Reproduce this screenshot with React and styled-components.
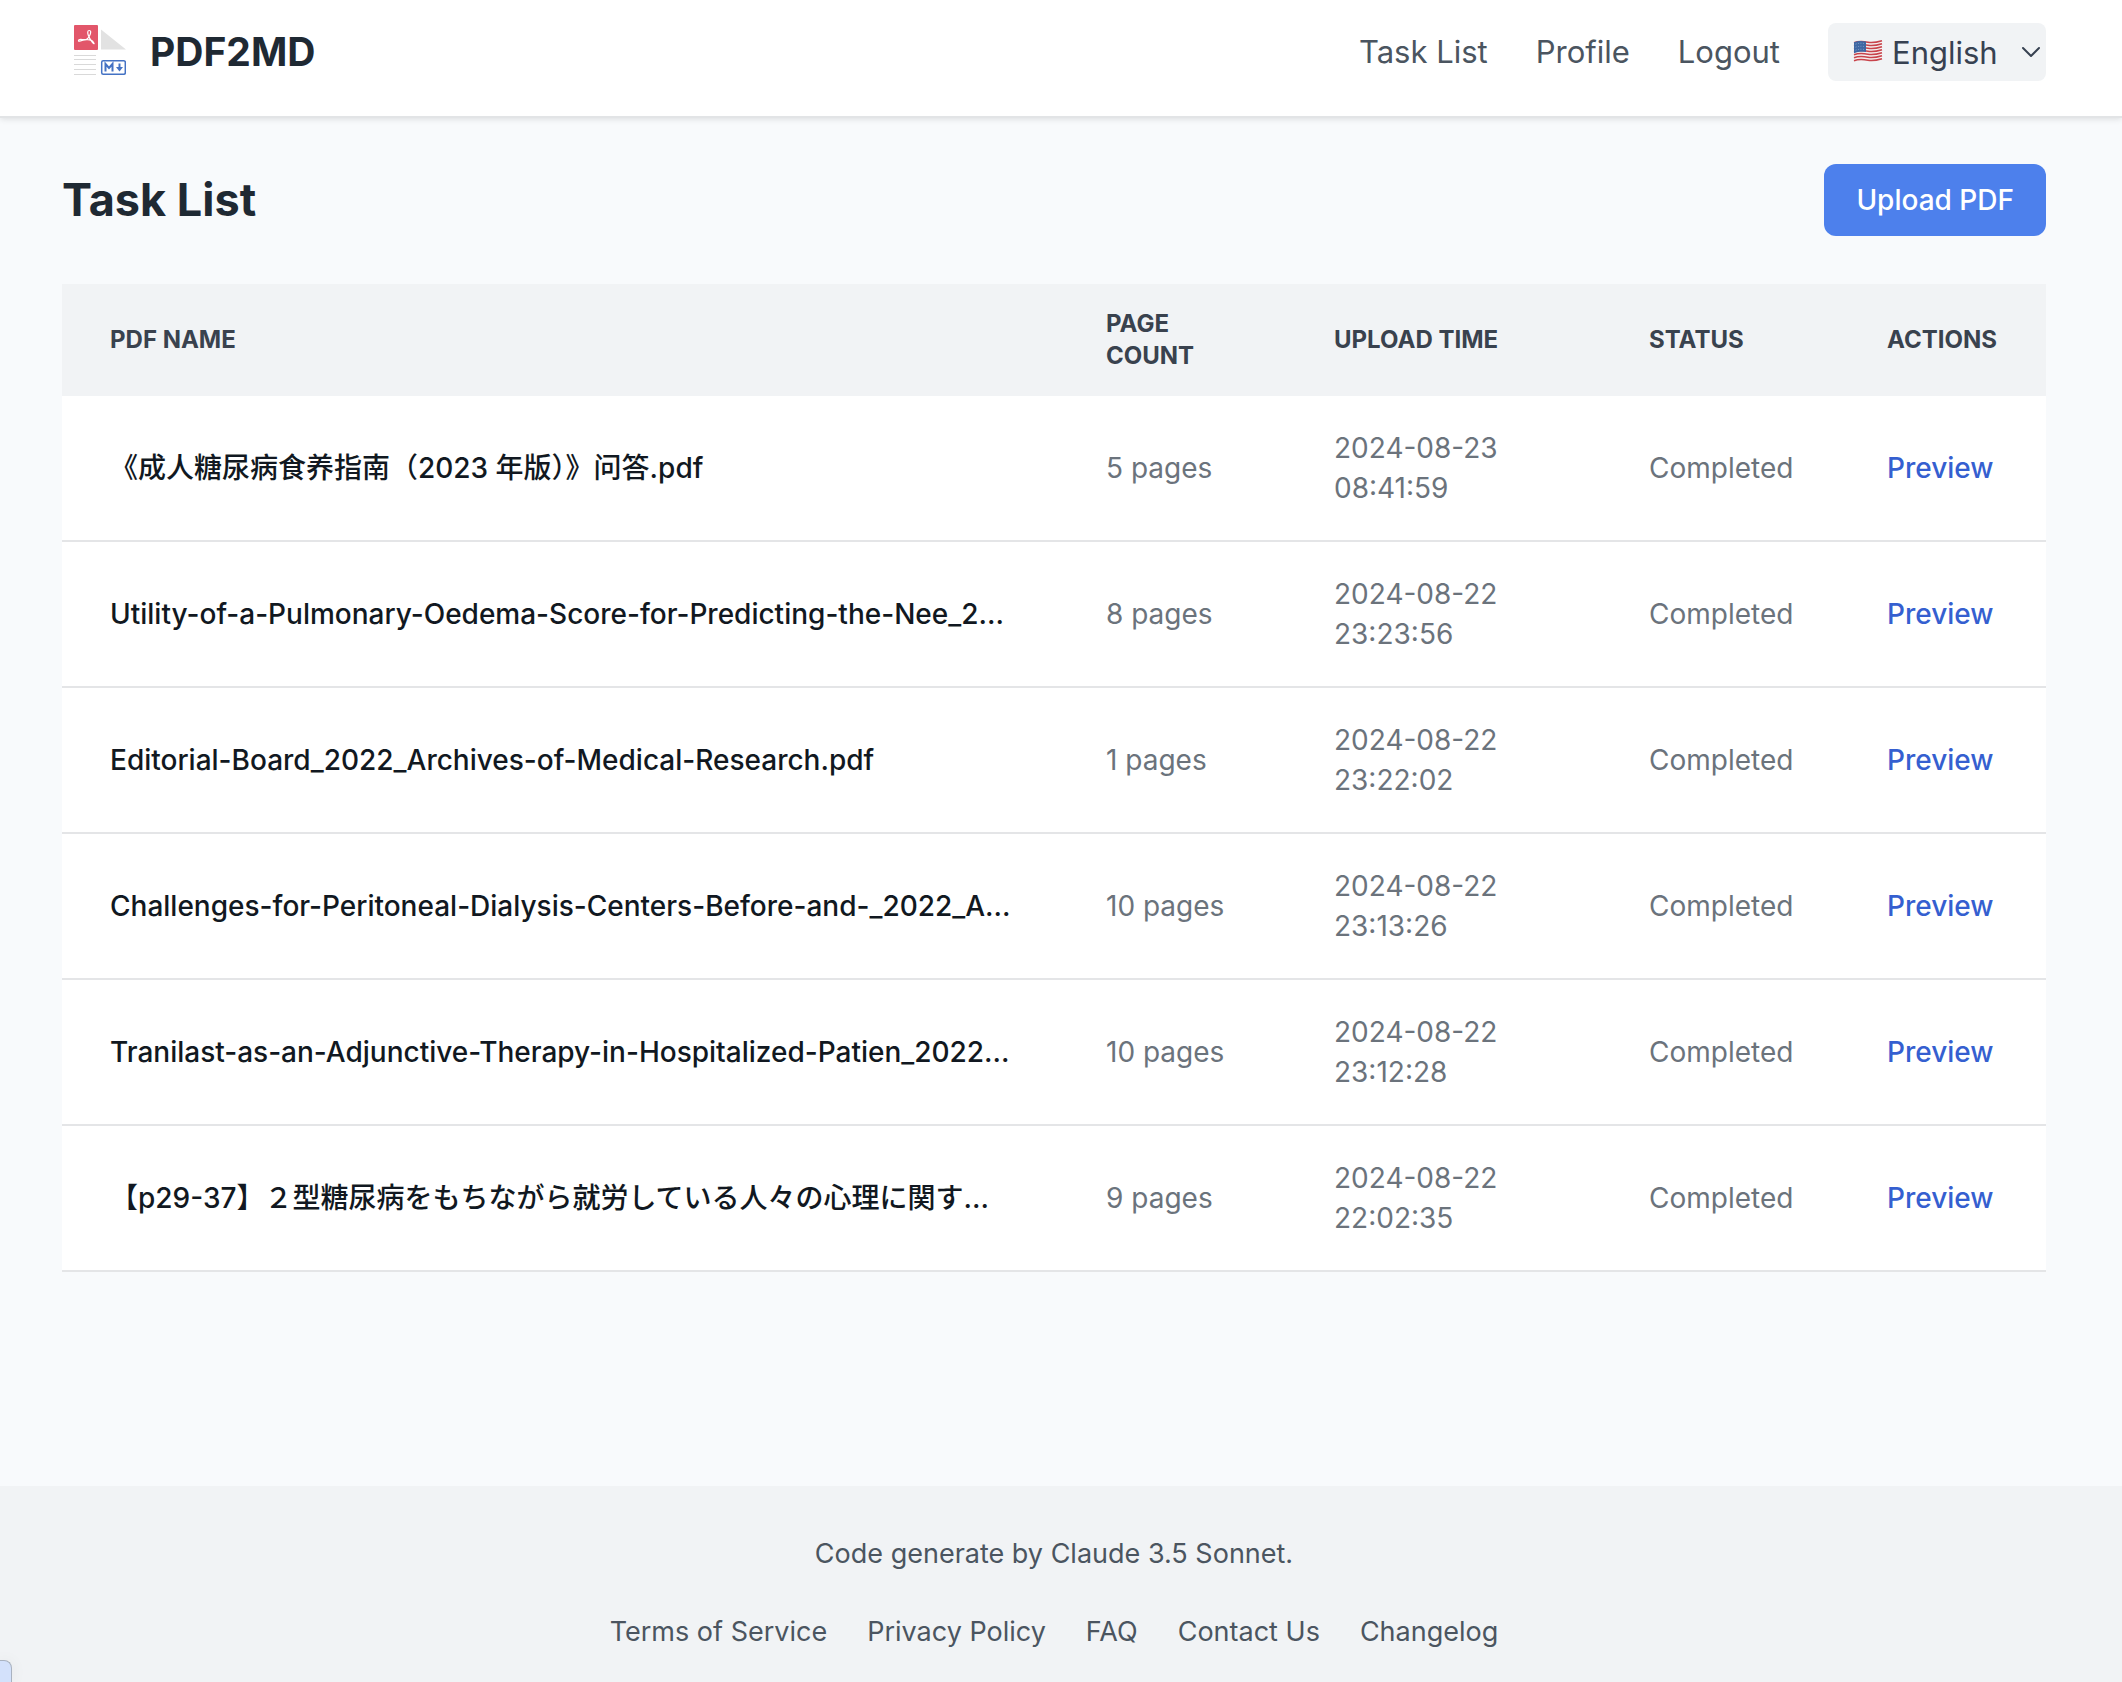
import React, { useState } from 'react';
import styled, { createGlobalStyle } from 'styled-components';

const GlobalStyle = createGlobalStyle`
  *, *::before, *::after {
    box-sizing: border-box;
  }

  body {
    margin: 0;
    background: #f8fafc;
    font-family: Inter, 'Noto Sans CJK SC', 'Noto Sans CJK JP', sans-serif;
    font-size: 28px;
    line-height: 40px;
    color: #1f2933;
  }
`;

const Page = styled.div`
  display: flex;
  flex-direction: column;
  min-height: 100vh;
`;

const Header = styled.header`
  display: flex;
  align-items: center;
  justify-content: space-between;
  padding: 23px 76px 35px 62px;
  background: #ffffff;
  box-shadow: 0 2px 0 #e2e4e6, 0 3px 6px rgba(0, 0, 0, 0.12);
`;

const Brand = styled.a`
  display: flex;
  align-items: center;
  gap: 24px;
  padding-left: 12px;
  font-size: 39px;
  font-weight: 700;
  color: #1f2933;
  text-decoration: none;
`;

const Nav = styled.nav`
  display: flex;
  align-items: center;
  gap: 48px;
`;

const NavLink = styled.a`
  font-size: 31px;
  line-height: 48px;
  color: #4b5560;
  text-decoration: none;
`;

const LanguageBox = styled.div`
  position: relative;
  display: flex;
`;

const LanguageSelect = styled.select`
  appearance: none;
  height: 58px;
  padding: 0 48px 0 64px;
  border: 0;
  border-radius: 8px;
  background: #f1f3f5;
  font-family: inherit;
  font-size: 31px;
  color: #374151;
`;

const FlagSlot = styled.span`
  position: absolute;
  top: 16px;
  left: 25px;
  display: flex;
  pointer-events: none;
`;

const ChevronSlot = styled.span`
  position: absolute;
  top: 23px;
  right: 5px;
  display: flex;
  pointer-events: none;
`;

const Main = styled.main`
  flex: 1;
  padding: 48px 76px 48px 62px;
`;

const TitleRow = styled.div`
  display: flex;
  align-items: center;
  justify-content: space-between;
  margin-bottom: 48px;
`;

const Title = styled.h1`
  margin: 0;
  font-size: 45px;
  line-height: 64px;
  font-weight: 700;
`;

const UploadButton = styled.button`
  padding: 16px 32px;
  border: 0;
  border-radius: 12px;
  background: #4d80ec;
  font-family: inherit;
  font-size: 28px;
  line-height: 40px;
  font-weight: 500;
  color: #ffffff;
  cursor: pointer;
`;

const Table = styled.table`
  width: 100%;
  table-layout: fixed;
  border-collapse: separate;
  border-spacing: 0;
  background: #ffffff;
`;

const HeadCell = styled.th`
  width: ${({ $width }) => $width || 'auto'};
  padding: 24px 40px 24px 48px;
  background: #f1f3f5;
  font-size: 24px;
  line-height: 32px;
  font-weight: 700;
  text-align: left;
  text-transform: uppercase;
  color: #39424e;
`;

const Cell = styled.td`
  padding: 32px 40px 32px 48px;
  border-bottom: 2px solid #e4e5e7;
  color: #6b737c;
`;

const NameCell = styled(Cell)`
  overflow: hidden;
  font-weight: 500;
  white-space: nowrap;
  text-overflow: ellipsis;
  color: #111821;
`;

const PreviewLink = styled.a`
  font-weight: 500;
  color: #355fd0;
  text-decoration: none;
`;

const Footer = styled.footer`
  display: flex;
  flex-direction: column;
  align-items: center;
  gap: 38px;
  padding: 48px 76px 30px 62px;
  background: #f1f3f5;
  font-size: 27px;
  color: #4b5560;
`;

const FooterText = styled.p`
  margin: 0;
`;

const FooterLinks = styled.div`
  display: flex;
  gap: 40px;
`;

const FooterLink = styled.a`
  color: inherit;
  text-decoration: none;
`;

const StatusBubble = styled.div`
  position: fixed;
  bottom: 0;
  left: 0;
  width: 12px;
  height: 22px;
  border: 1px solid #a9b2c0;
  border-width: 1px 1px 0 0;
  border-top-right-radius: 8px;
  background: #d3e1fb;
  box-shadow: 0 0 16px rgba(0, 0, 0, 0.06);
`;

const Logo = () => (
  <svg width="52" height="54" viewBox="0 0 52 54" aria-hidden="true">
    <rect width="24" height="25" rx="1" fill="#e2566a" />
    <path
      d="M15 5.500c-1.500 0-1.500 2.500-.8 4.500.8 2.600 2.300 5 4.200 7.400 1.200 1.500 2.300 2 1.300.3-1.200-2-4-3.200-7-3-2.600.2-5.300.8-7 1.400-1.600.6-1.600-1.300 0-1.600 2.200-.4 4.300.7 6.800-.3 2-1 4.200-4.600 4.200-7.200 0-1-.6-1.600-1.700-1.500z"
      fill="none"
      stroke="#ffffff"
      strokeWidth="1.200"
      strokeLinejoin="round"
    />
    <path d="M27 4.500 52 24.500H27z" fill="#e2e2e2" />
    <path
      d="M0 30.500h22M0 34.500h22M0 39.500h22M0 44.500h22M0 49.500h22"
      stroke="#d9d9d9"
      strokeWidth="1.200"
    />
    <rect x="27.700" y="35.700" width="23.600" height="13.600" rx="1.500" fill="#ffffff" stroke="#4472c4" strokeWidth="1.500" />
    <path d="M31.500 46.500v-7.500l3.500 4 3.500-4v7.500" fill="none" stroke="#4472c4" strokeWidth="2" />
    <path d="M45.500 38.500v4.500" stroke="#4472c4" strokeWidth="2" />
    <path d="M42 42h7l-3.500 4.500z" fill="#4472c4" />
  </svg>
);

const Flag = () => (
  <svg width="30" height="24" viewBox="0 0 30 24" aria-hidden="true">
    <path d="M1 3.500c5-2 9-1.500 14-.5s9 0 14-1.500v18.500c-5 1.500-9 2-14 1s-9-1-14 1z" fill="#f4f0f0" />
    {[0, 3, 6, 9, 12, 15, 18].map((y) => (
      <path
        key={y}
        d={`M1 ${y + 3.7}c5-2 9-1.500 14-.5s9 0 14-1.500`}
        fill="none"
        stroke="#c8434b"
        strokeWidth="1.500"
      />
    ))}
    <path d="M1 3.300c4.500-1.800 8-1.500 12-.7v10.400c-4-.6-7.500-.6-12 1.200z" fill="#3f67a3" />
    <path
      d="M2.500 5.200c4-1.300 6.500-1 9.500-.6M2.500 8.200c4-1.300 6.500-1 9.500-.6M2.500 11.200c4-1.300 6.500-1 9.500-.6"
      fill="none"
      stroke="#8fa8cc"
      strokeWidth="0.800"
      strokeDasharray="1 1.500"
    />
  </svg>
);

const Chevron = () => (
  <svg width="20" height="12" viewBox="0 0 20 12" aria-hidden="true">
    <path
      d="M2 2l8 8 8-8"
      fill="none"
      stroke="#374151"
      strokeWidth="2"
      strokeLinecap="round"
      strokeLinejoin="round"
    />
  </svg>
);

const navLinks = ['Task List', 'Profile', 'Logout'];

const footerLinks = [
  'Terms of Service',
  'Privacy Policy',
  'FAQ',
  'Contact Us',
  'Changelog',
];

const tasks = [
  { id: 1, name: '《成人糖尿病食养指南（2023 年版）》问答.pdf', pages: 5, date: '2024-08-23', time: '08:41:59' },
  { id: 2, name: 'Utility-of-a-Pulmonary-Oedema-Score-for-Predicting-the-Nee_2...', pages: 8, date: '2024-08-22', time: '23:23:56' },
  { id: 3, name: 'Editorial-Board_2022_Archives-of-Medical-Research.pdf', pages: 1, date: '2024-08-22', time: '23:22:02' },
  { id: 4, name: 'Challenges-for-Peritoneal-Dialysis-Centers-Before-and-_2022_A...', pages: 10, date: '2024-08-22', time: '23:13:26' },
  { id: 5, name: 'Tranilast-as-an-Adjunctive-Therapy-in-Hospitalized-Patien_2022...', pages: 10, date: '2024-08-22', time: '23:12:28' },
  { id: 6, name: '【p29-37】２型糖尿病をもちながら就労している人々の心理に関す...', lang: 'ja', pages: 9, date: '2024-08-22', time: '22:02:35' },
];

const LanguagePicker = () => {
  const [language, setLanguage] = useState('en');

  return (
    <LanguageBox>
      <LanguageSelect
        aria-label="Language"
        value={language}
        onChange={(e) => setLanguage(e.target.value)}
      >
        <option value="en">English</option>
      </LanguageSelect>
      <FlagSlot>
        <Flag />
      </FlagSlot>
      <ChevronSlot>
        <Chevron />
      </ChevronSlot>
    </LanguageBox>
  );
};

const TaskTable = ({ data }) => (
  <Table>
    <thead>
      <tr>
        <HeadCell>PDF Name</HeadCell>
        <HeadCell $width="228px">Page Count</HeadCell>
        <HeadCell $width="315px">Upload Time</HeadCell>
        <HeadCell $width="238px">Status</HeadCell>
        <HeadCell $width="207px">Actions</HeadCell>
      </tr>
    </thead>
    <tbody>
      {data.map((task) => (
        <tr key={task.id}>
          <NameCell lang={task.lang}>{task.name}</NameCell>
          <Cell>{task.pages} pages</Cell>
          <Cell>
            {task.date}
            <br />
            {task.time}
          </Cell>
          <Cell>Completed</Cell>
          <Cell>
            <PreviewLink href="#preview">Preview</PreviewLink>
          </Cell>
        </tr>
      ))}
    </tbody>
  </Table>
);

const App = () => (
  <>
    <GlobalStyle />
    <Page>
      <Header>
        <Brand href="#home">
          <Logo />
          PDF2MD
        </Brand>
        <Nav>
          {navLinks.map((label) => (
            <NavLink key={label} href="#nav">
              {label}
            </NavLink>
          ))}
          <LanguagePicker />
        </Nav>
      </Header>
      <Main>
        <TitleRow>
          <Title>Task List</Title>
          <UploadButton type="button">Upload PDF</UploadButton>
        </TitleRow>
        <TaskTable data={tasks} />
      </Main>
      <Footer>
        <FooterText>Code generate by Claude 3.5 Sonnet.</FooterText>
        <FooterLinks>
          {footerLinks.map((label) => (
            <FooterLink key={label} href="#footer">
              {label}
            </FooterLink>
          ))}
        </FooterLinks>
      </Footer>
      <StatusBubble />
    </Page>
  </>
);

export default App;
